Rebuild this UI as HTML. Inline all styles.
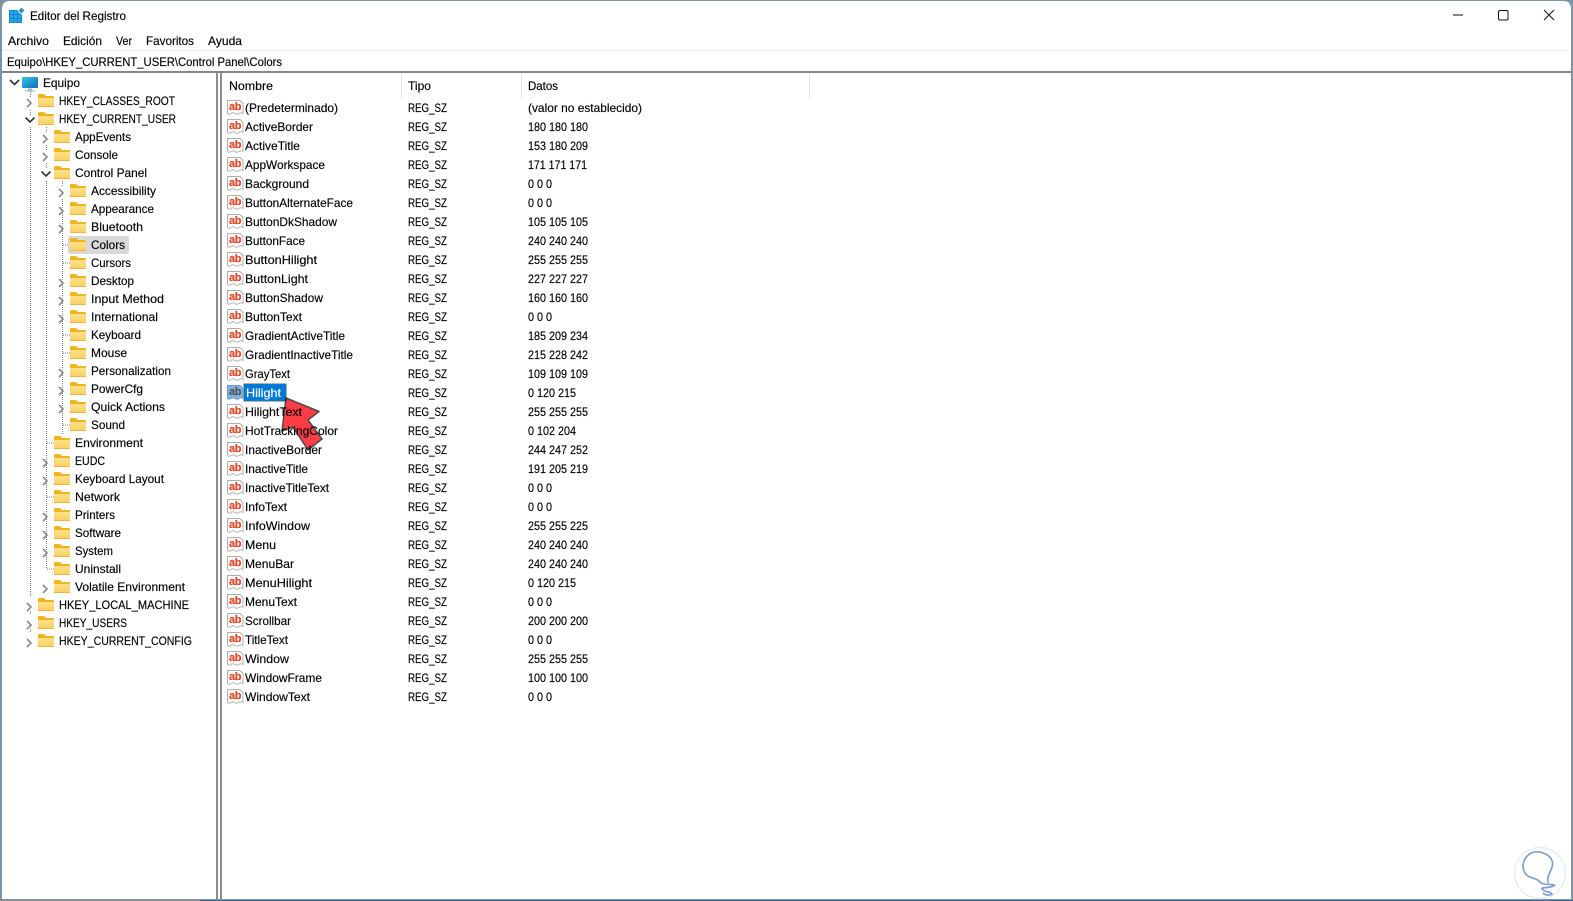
<!DOCTYPE html>
<html lang="es">
<head>
<meta charset="utf-8">
<title>Editor del Registro</title>
<style>
html,body{margin:0;padding:0;width:1573px;height:901px;overflow:hidden;background:#7f93a6}
svg{display:block;position:absolute;left:0;top:0}
text{font-family:"Liberation Sans",sans-serif;font-size:12px;fill:#000;stroke:#000;stroke-width:.15px}
.ab{font-size:11px;font-weight:bold;fill:#e0482a;stroke:#e0482a;stroke-width:.2px;letter-spacing:-.4px}
</style>
</head>
<body>
<svg width="1573" height="901" viewBox="0 0 1573 901" xmlns="http://www.w3.org/2000/svg">
<defs>
<linearGradient id="fg" x1="0" y1="0" x2="0" y2="1"><stop offset="0" stop-color="#ffe08a"/><stop offset="1" stop-color="#fbd062"/></linearGradient>
<linearGradient id="sc" x1="0" y1="0" x2="1" y2="1"><stop offset="0" stop-color="#35c3ea"/><stop offset="1" stop-color="#0f6fb8"/></linearGradient>
<symbol id="f" width="16" height="13" viewBox="0 0 16 13" overflow="visible">
<path d="M0 1.2Q0 0 1.2 0H6L8 2H15Q16 2 16 3V5H0Z" fill="#f1b41f"/>
<path d="M0 4H15.5Q16 4 16 4.5V12Q16 13 15 13H1Q0 13 0 12Z" fill="url(#fg)"/>
<path d="M0 12.5H16" stroke="#eeb63a" stroke-width="1"/>
</symbol>
<symbol id="d" width="18" height="16" viewBox="0 0 18 16" overflow="visible">
<path d="M.5.5H13L16 3.5V13.5Q14 12 12 13.5T8 13.5T4 13.5T.5 13.5Z" fill="#fff" stroke="#b0b0b0"/>
</symbol>
<path id="cr" d="M27 81L31 85L27 89" fill="none" stroke="#8b8b8b" stroke-width="1.6"/>
<path id="ce" d="M25.5 81.500L30 86L34.500 81.500" fill="none" stroke="#333" stroke-width="1.6"/>
</defs>

<!-- window -->
<path d="M2 899V9Q2 1 10 1H1563Q1571 1 1571 9V899Z" fill="#fff"/>
<rect x="0" y="899" width="1573" height="2" fill="#868e96"/>
<rect x="200" y="900" width="1373" height="1" fill="#3f6d9c"/>
<rect x="2" y="50" width="1569" height="1" fill="#efefef"/>
<rect x="2" y="71" width="1569" height="2" fill="#868686"/>
<rect x="216" y="73" width="2" height="826" fill="#8d8d8d"/>
<rect x="220" y="73" width="2" height="826" fill="#8d8d8d"/>

<!-- title bar -->
<rect x="9" y="10" width="13" height="13" fill="#0f74bc"/>
<g fill="#25a6ea">
<rect x="9.500" y="10.500" width="3.600" height="3.600"/><rect x="13.700" y="10.500" width="3.600" height="3.600"/><rect x="17.900" y="10.500" width="3.600" height="3.600"/>
<rect x="9.500" y="14.700" width="3.600" height="3.600"/><rect x="13.700" y="14.700" width="3.600" height="3.600"/><rect x="17.900" y="14.700" width="3.600" height="3.600"/>
<rect x="9.500" y="18.900" width="3.600" height="3.600"/><rect x="13.700" y="18.900" width="3.600" height="3.600"/><rect x="17.900" y="18.900" width="3.600" height="3.600"/>
</g>
<path d="M21.500 7L25 10.500L21.500 14L18 10.500Z" fill="#2a8fd4" stroke="#fff" stroke-width=".8"/>
<text x="30" y="20" textLength="96" lengthAdjust="spacingAndGlyphs">Editor del Registro</text>
<path d="M1453 15H1463" stroke="#111" stroke-width="1"/>
<rect x="1498.500" y="10.500" width="9.500" height="9.500" rx="1.500" fill="none" stroke="#111"/>
<path d="M1544 10L1554 20M1554 10L1544 20" stroke="#111" stroke-width="1"/>

<!-- menu -->
<text x="8" y="45" textLength="41" lengthAdjust="spacingAndGlyphs">Archivo</text>
<text x="63" y="45" textLength="39" lengthAdjust="spacingAndGlyphs">Edición</text>
<text x="116" y="45" textLength="16" lengthAdjust="spacingAndGlyphs">Ver</text>
<text x="146" y="45" textLength="48" lengthAdjust="spacingAndGlyphs">Favoritos</text>
<text x="208" y="45" textLength="34" lengthAdjust="spacingAndGlyphs">Ayuda</text>

<!-- address -->
<text x="7" y="66" textLength="275" lengthAdjust="spacingAndGlyphs">Equipo\HKEY_CURRENT_USER\Control Panel\Colors</text>

<!-- tree guides -->
<g stroke="#7d7d7d" stroke-dasharray="1 1" fill="none">
<path d="M30.500 92V97M30.500 110V115M30.500 127V597M30.500 611V615M30.500 629V633"/>
<path d="M46.500 127V132M46.500 145V150M46.500 163V168M46.500 181V568M54 443H47M54 497H47M54 569H47"/>
<path d="M62.500 181V186M62.500 199V435M70 245H63M70 263H63M70 335H63M70 353H63M70 425H63"/>
</g>
<rect x="68" y="236" width="61" height="18" rx="2" fill="#d9d9d9"/>

<!-- tree -->
<use href="#ce" x="-15.500" y="-1.500"/>
<rect x="22" y="77" width="16" height="11" rx="1" fill="url(#sc)"/>
<path d="M28 88.500H32V90.500H35V91.500H25V90.500H28Z" fill="#9db6c6"/>
<text x="43" y="87" textLength="37" lengthAdjust="spacingAndGlyphs">Equipo</text>

<g transform="translate(0,18)"><use href="#cr"/><use href="#f" x="38" y="76"/><text x="59" y="87" textLength="116" lengthAdjust="spacingAndGlyphs">HKEY_CLASSES_ROOT</text></g>
<g transform="translate(0,36)"><use href="#ce"/><use href="#f" x="38" y="76"/><text x="59" y="87" textLength="117" lengthAdjust="spacingAndGlyphs">HKEY_CURRENT_USER</text></g>
<g transform="translate(0,54)"><use href="#cr" x="16"/><use href="#f" x="54" y="76"/><text x="75" y="87" textLength="56" lengthAdjust="spacingAndGlyphs">AppEvents</text></g>
<g transform="translate(0,72)"><use href="#cr" x="16"/><use href="#f" x="54" y="76"/><text x="75" y="87" textLength="43" lengthAdjust="spacingAndGlyphs">Console</text></g>
<g transform="translate(0,90)"><use href="#ce" x="16"/><use href="#f" x="54" y="76"/><text x="75" y="87" textLength="72" lengthAdjust="spacingAndGlyphs">Control Panel</text></g>
<g transform="translate(0,108)"><use href="#cr" x="32"/><use href="#f" x="70" y="76"/><text x="91" y="87" textLength="65" lengthAdjust="spacingAndGlyphs">Accessibility</text></g>
<g transform="translate(0,126)"><use href="#cr" x="32"/><use href="#f" x="70" y="76"/><text x="91" y="87" textLength="63" lengthAdjust="spacingAndGlyphs">Appearance</text></g>
<g transform="translate(0,144)"><use href="#cr" x="32"/><use href="#f" x="70" y="76"/><text x="91" y="87" textLength="52" lengthAdjust="spacingAndGlyphs">Bluetooth</text></g>
<g transform="translate(0,162)"><use href="#f" x="70" y="76"/><text x="91" y="87" textLength="34" lengthAdjust="spacingAndGlyphs">Colors</text></g>
<g transform="translate(0,180)"><use href="#f" x="70" y="76"/><text x="91" y="87" textLength="40" lengthAdjust="spacingAndGlyphs">Cursors</text></g>
<g transform="translate(0,198)"><use href="#cr" x="32"/><use href="#f" x="70" y="76"/><text x="91" y="87" textLength="43" lengthAdjust="spacingAndGlyphs">Desktop</text></g>
<g transform="translate(0,216)"><use href="#cr" x="32"/><use href="#f" x="70" y="76"/><text x="91" y="87" textLength="73" lengthAdjust="spacingAndGlyphs">Input Method</text></g>
<g transform="translate(0,234)"><use href="#cr" x="32"/><use href="#f" x="70" y="76"/><text x="91" y="87" textLength="67" lengthAdjust="spacingAndGlyphs">International</text></g>
<g transform="translate(0,252)"><use href="#f" x="70" y="76"/><text x="91" y="87" textLength="50" lengthAdjust="spacingAndGlyphs">Keyboard</text></g>
<g transform="translate(0,270)"><use href="#f" x="70" y="76"/><text x="91" y="87" textLength="36" lengthAdjust="spacingAndGlyphs">Mouse</text></g>
<g transform="translate(0,288)"><use href="#cr" x="32"/><use href="#f" x="70" y="76"/><text x="91" y="87" textLength="80" lengthAdjust="spacingAndGlyphs">Personalization</text></g>
<g transform="translate(0,306)"><use href="#cr" x="32"/><use href="#f" x="70" y="76"/><text x="91" y="87" textLength="52" lengthAdjust="spacingAndGlyphs">PowerCfg</text></g>
<g transform="translate(0,324)"><use href="#cr" x="32"/><use href="#f" x="70" y="76"/><text x="91" y="87" textLength="74" lengthAdjust="spacingAndGlyphs">Quick Actions</text></g>
<g transform="translate(0,342)"><use href="#f" x="70" y="76"/><text x="91" y="87" textLength="34" lengthAdjust="spacingAndGlyphs">Sound</text></g>
<g transform="translate(0,360)"><use href="#f" x="54" y="76"/><text x="75" y="87" textLength="68" lengthAdjust="spacingAndGlyphs">Environment</text></g>
<g transform="translate(0,378)"><use href="#cr" x="16"/><use href="#f" x="54" y="76"/><text x="75" y="87" textLength="30" lengthAdjust="spacingAndGlyphs">EUDC</text></g>
<g transform="translate(0,396)"><use href="#cr" x="16"/><use href="#f" x="54" y="76"/><text x="75" y="87" textLength="89" lengthAdjust="spacingAndGlyphs">Keyboard Layout</text></g>
<g transform="translate(0,414)"><use href="#f" x="54" y="76"/><text x="75" y="87" textLength="45" lengthAdjust="spacingAndGlyphs">Network</text></g>
<g transform="translate(0,432)"><use href="#cr" x="16"/><use href="#f" x="54" y="76"/><text x="75" y="87" textLength="40" lengthAdjust="spacingAndGlyphs">Printers</text></g>
<g transform="translate(0,450)"><use href="#cr" x="16"/><use href="#f" x="54" y="76"/><text x="75" y="87" textLength="46" lengthAdjust="spacingAndGlyphs">Software</text></g>
<g transform="translate(0,468)"><use href="#cr" x="16"/><use href="#f" x="54" y="76"/><text x="75" y="87" textLength="38" lengthAdjust="spacingAndGlyphs">System</text></g>
<g transform="translate(0,486)"><use href="#f" x="54" y="76"/><text x="75" y="87" textLength="46" lengthAdjust="spacingAndGlyphs">Uninstall</text></g>
<g transform="translate(0,504)"><use href="#cr" x="16"/><use href="#f" x="54" y="76"/><text x="75" y="87" textLength="110" lengthAdjust="spacingAndGlyphs">Volatile Environment</text></g>
<g transform="translate(0,522)"><use href="#cr"/><use href="#f" x="38" y="76"/><text x="59" y="87" textLength="130" lengthAdjust="spacingAndGlyphs">HKEY_LOCAL_MACHINE</text></g>
<g transform="translate(0,540)"><use href="#cr"/><use href="#f" x="38" y="76"/><text x="59" y="87" textLength="68" lengthAdjust="spacingAndGlyphs">HKEY_USERS</text></g>
<g transform="translate(0,558)"><use href="#cr"/><use href="#f" x="38" y="76"/><text x="59" y="87" textLength="133" lengthAdjust="spacingAndGlyphs">HKEY_CURRENT_CONFIG</text></g>

<!-- list header -->
<text x="229" y="90" textLength="44" lengthAdjust="spacingAndGlyphs">Nombre</text>
<text x="408" y="90" textLength="23" lengthAdjust="spacingAndGlyphs">Tipo</text>
<text x="528" y="90" textLength="30" lengthAdjust="spacingAndGlyphs">Datos</text>
<path d="M401.500 74V98M521.500 74V98M809.500 74V98" stroke="#e5e5e5" stroke-width="1"/>

<!-- list rows -->
<g><use href="#d" x="227" y="100"/><text class="ab" x="229" y="110">ab</text><text x="245" y="112" textLength="93" lengthAdjust="spacingAndGlyphs">(Predeterminado)</text><text x="408" y="112" textLength="39" lengthAdjust="spacingAndGlyphs">REG_SZ</text><text x="528" y="112" textLength="114" lengthAdjust="spacingAndGlyphs">(valor no establecido)</text></g>
<g transform="translate(0,19)"><use href="#d" x="227" y="100"/><text class="ab" x="229" y="110">ab</text><text x="245" y="112" textLength="68" lengthAdjust="spacingAndGlyphs">ActiveBorder</text><text x="408" y="112" textLength="39" lengthAdjust="spacingAndGlyphs">REG_SZ</text><text x="528" y="112" textLength="60" lengthAdjust="spacingAndGlyphs">180 180 180</text></g>
<g transform="translate(0,38)"><use href="#d" x="227" y="100"/><text class="ab" x="229" y="110">ab</text><text x="245" y="112" textLength="55" lengthAdjust="spacingAndGlyphs">ActiveTitle</text><text x="408" y="112" textLength="39" lengthAdjust="spacingAndGlyphs">REG_SZ</text><text x="528" y="112" textLength="60" lengthAdjust="spacingAndGlyphs">153 180 209</text></g>
<g transform="translate(0,57)"><use href="#d" x="227" y="100"/><text class="ab" x="229" y="110">ab</text><text x="245" y="112" textLength="80" lengthAdjust="spacingAndGlyphs">AppWorkspace</text><text x="408" y="112" textLength="39" lengthAdjust="spacingAndGlyphs">REG_SZ</text><text x="528" y="112" textLength="59" lengthAdjust="spacingAndGlyphs">171 171 171</text></g>
<g transform="translate(0,76)"><use href="#d" x="227" y="100"/><text class="ab" x="229" y="110">ab</text><text x="245" y="112" textLength="64" lengthAdjust="spacingAndGlyphs">Background</text><text x="408" y="112" textLength="39" lengthAdjust="spacingAndGlyphs">REG_SZ</text><text x="528" y="112" textLength="24" lengthAdjust="spacingAndGlyphs">0 0 0</text></g>
<g transform="translate(0,95)"><use href="#d" x="227" y="100"/><text class="ab" x="229" y="110">ab</text><text x="245" y="112" textLength="108" lengthAdjust="spacingAndGlyphs">ButtonAlternateFace</text><text x="408" y="112" textLength="39" lengthAdjust="spacingAndGlyphs">REG_SZ</text><text x="528" y="112" textLength="24" lengthAdjust="spacingAndGlyphs">0 0 0</text></g>
<g transform="translate(0,114)"><use href="#d" x="227" y="100"/><text class="ab" x="229" y="110">ab</text><text x="245" y="112" textLength="92" lengthAdjust="spacingAndGlyphs">ButtonDkShadow</text><text x="408" y="112" textLength="39" lengthAdjust="spacingAndGlyphs">REG_SZ</text><text x="528" y="112" textLength="60" lengthAdjust="spacingAndGlyphs">105 105 105</text></g>
<g transform="translate(0,133)"><use href="#d" x="227" y="100"/><text class="ab" x="229" y="110">ab</text><text x="245" y="112" textLength="60" lengthAdjust="spacingAndGlyphs">ButtonFace</text><text x="408" y="112" textLength="39" lengthAdjust="spacingAndGlyphs">REG_SZ</text><text x="528" y="112" textLength="60" lengthAdjust="spacingAndGlyphs">240 240 240</text></g>
<g transform="translate(0,152)"><use href="#d" x="227" y="100"/><text class="ab" x="229" y="110">ab</text><text x="245" y="112" textLength="72" lengthAdjust="spacingAndGlyphs">ButtonHilight</text><text x="408" y="112" textLength="39" lengthAdjust="spacingAndGlyphs">REG_SZ</text><text x="528" y="112" textLength="60" lengthAdjust="spacingAndGlyphs">255 255 255</text></g>
<g transform="translate(0,171)"><use href="#d" x="227" y="100"/><text class="ab" x="229" y="110">ab</text><text x="245" y="112" textLength="63" lengthAdjust="spacingAndGlyphs">ButtonLight</text><text x="408" y="112" textLength="39" lengthAdjust="spacingAndGlyphs">REG_SZ</text><text x="528" y="112" textLength="60" lengthAdjust="spacingAndGlyphs">227 227 227</text></g>
<g transform="translate(0,190)"><use href="#d" x="227" y="100"/><text class="ab" x="229" y="110">ab</text><text x="245" y="112" textLength="78" lengthAdjust="spacingAndGlyphs">ButtonShadow</text><text x="408" y="112" textLength="39" lengthAdjust="spacingAndGlyphs">REG_SZ</text><text x="528" y="112" textLength="60" lengthAdjust="spacingAndGlyphs">160 160 160</text></g>
<g transform="translate(0,209)"><use href="#d" x="227" y="100"/><text class="ab" x="229" y="110">ab</text><text x="245" y="112" textLength="57" lengthAdjust="spacingAndGlyphs">ButtonText</text><text x="408" y="112" textLength="39" lengthAdjust="spacingAndGlyphs">REG_SZ</text><text x="528" y="112" textLength="24" lengthAdjust="spacingAndGlyphs">0 0 0</text></g>
<g transform="translate(0,228)"><use href="#d" x="227" y="100"/><text class="ab" x="229" y="110">ab</text><text x="245" y="112" textLength="100" lengthAdjust="spacingAndGlyphs">GradientActiveTitle</text><text x="408" y="112" textLength="39" lengthAdjust="spacingAndGlyphs">REG_SZ</text><text x="528" y="112" textLength="60" lengthAdjust="spacingAndGlyphs">185 209 234</text></g>
<g transform="translate(0,247)"><use href="#d" x="227" y="100"/><text class="ab" x="229" y="110">ab</text><text x="245" y="112" textLength="108" lengthAdjust="spacingAndGlyphs">GradientInactiveTitle</text><text x="408" y="112" textLength="39" lengthAdjust="spacingAndGlyphs">REG_SZ</text><text x="528" y="112" textLength="60" lengthAdjust="spacingAndGlyphs">215 228 242</text></g>
<g transform="translate(0,266)"><use href="#d" x="227" y="100"/><text class="ab" x="229" y="110">ab</text><text x="245" y="112" textLength="45" lengthAdjust="spacingAndGlyphs">GrayText</text><text x="408" y="112" textLength="39" lengthAdjust="spacingAndGlyphs">REG_SZ</text><text x="528" y="112" textLength="60" lengthAdjust="spacingAndGlyphs">109 109 109</text></g>
<g transform="translate(0,285)">
<path d="M227.500 100.500H240L243 103.500V113.500Q241 112 239 113.500T235 113.500T231 113.500T227.500 113.500Z" fill="#7fb3e2" stroke="#6a9ccb"/>
<text class="ab" x="229" y="110" style="fill:#555;stroke:#555">ab</text>
<rect x="243.500" y="98.500" width="43" height="18" fill="#0078d7" stroke="#f3a94a" stroke-dasharray="1 1"/>
<text x="246" y="112" textLength="35" lengthAdjust="spacingAndGlyphs" style="fill:#fff;stroke:#fff">Hilight</text>
<text x="408" y="112" textLength="39" lengthAdjust="spacingAndGlyphs">REG_SZ</text><text x="528" y="112" textLength="48" lengthAdjust="spacingAndGlyphs">0 120 215</text></g>
<g transform="translate(0,304)"><use href="#d" x="227" y="100"/><text class="ab" x="229" y="110">ab</text><text x="245" y="112" textLength="57" lengthAdjust="spacingAndGlyphs">HilightText</text><text x="408" y="112" textLength="39" lengthAdjust="spacingAndGlyphs">REG_SZ</text><text x="528" y="112" textLength="60" lengthAdjust="spacingAndGlyphs">255 255 255</text></g>
<g transform="translate(0,323)"><use href="#d" x="227" y="100"/><text class="ab" x="229" y="110">ab</text><text x="245" y="112" textLength="93" lengthAdjust="spacingAndGlyphs">HotTrackingColor</text><text x="408" y="112" textLength="39" lengthAdjust="spacingAndGlyphs">REG_SZ</text><text x="528" y="112" textLength="48" lengthAdjust="spacingAndGlyphs">0 102 204</text></g>
<g transform="translate(0,342)"><use href="#d" x="227" y="100"/><text class="ab" x="229" y="110">ab</text><text x="245" y="112" textLength="77" lengthAdjust="spacingAndGlyphs">InactiveBorder</text><text x="408" y="112" textLength="39" lengthAdjust="spacingAndGlyphs">REG_SZ</text><text x="528" y="112" textLength="60" lengthAdjust="spacingAndGlyphs">244 247 252</text></g>
<g transform="translate(0,361)"><use href="#d" x="227" y="100"/><text class="ab" x="229" y="110">ab</text><text x="245" y="112" textLength="63" lengthAdjust="spacingAndGlyphs">InactiveTitle</text><text x="408" y="112" textLength="39" lengthAdjust="spacingAndGlyphs">REG_SZ</text><text x="528" y="112" textLength="60" lengthAdjust="spacingAndGlyphs">191 205 219</text></g>
<g transform="translate(0,380)"><use href="#d" x="227" y="100"/><text class="ab" x="229" y="110">ab</text><text x="245" y="112" textLength="84" lengthAdjust="spacingAndGlyphs">InactiveTitleText</text><text x="408" y="112" textLength="39" lengthAdjust="spacingAndGlyphs">REG_SZ</text><text x="528" y="112" textLength="24" lengthAdjust="spacingAndGlyphs">0 0 0</text></g>
<g transform="translate(0,399)"><use href="#d" x="227" y="100"/><text class="ab" x="229" y="110">ab</text><text x="245" y="112" textLength="42" lengthAdjust="spacingAndGlyphs">InfoText</text><text x="408" y="112" textLength="39" lengthAdjust="spacingAndGlyphs">REG_SZ</text><text x="528" y="112" textLength="24" lengthAdjust="spacingAndGlyphs">0 0 0</text></g>
<g transform="translate(0,418)"><use href="#d" x="227" y="100"/><text class="ab" x="229" y="110">ab</text><text x="245" y="112" textLength="65" lengthAdjust="spacingAndGlyphs">InfoWindow</text><text x="408" y="112" textLength="39" lengthAdjust="spacingAndGlyphs">REG_SZ</text><text x="528" y="112" textLength="60" lengthAdjust="spacingAndGlyphs">255 255 225</text></g>
<g transform="translate(0,437)"><use href="#d" x="227" y="100"/><text class="ab" x="229" y="110">ab</text><text x="245" y="112" textLength="31" lengthAdjust="spacingAndGlyphs">Menu</text><text x="408" y="112" textLength="39" lengthAdjust="spacingAndGlyphs">REG_SZ</text><text x="528" y="112" textLength="60" lengthAdjust="spacingAndGlyphs">240 240 240</text></g>
<g transform="translate(0,456)"><use href="#d" x="227" y="100"/><text class="ab" x="229" y="110">ab</text><text x="245" y="112" textLength="49" lengthAdjust="spacingAndGlyphs">MenuBar</text><text x="408" y="112" textLength="39" lengthAdjust="spacingAndGlyphs">REG_SZ</text><text x="528" y="112" textLength="60" lengthAdjust="spacingAndGlyphs">240 240 240</text></g>
<g transform="translate(0,475)"><use href="#d" x="227" y="100"/><text class="ab" x="229" y="110">ab</text><text x="245" y="112" textLength="67" lengthAdjust="spacingAndGlyphs">MenuHilight</text><text x="408" y="112" textLength="39" lengthAdjust="spacingAndGlyphs">REG_SZ</text><text x="528" y="112" textLength="48" lengthAdjust="spacingAndGlyphs">0 120 215</text></g>
<g transform="translate(0,494)"><use href="#d" x="227" y="100"/><text class="ab" x="229" y="110">ab</text><text x="245" y="112" textLength="52" lengthAdjust="spacingAndGlyphs">MenuText</text><text x="408" y="112" textLength="39" lengthAdjust="spacingAndGlyphs">REG_SZ</text><text x="528" y="112" textLength="24" lengthAdjust="spacingAndGlyphs">0 0 0</text></g>
<g transform="translate(0,513)"><use href="#d" x="227" y="100"/><text class="ab" x="229" y="110">ab</text><text x="245" y="112" textLength="46" lengthAdjust="spacingAndGlyphs">Scrollbar</text><text x="408" y="112" textLength="39" lengthAdjust="spacingAndGlyphs">REG_SZ</text><text x="528" y="112" textLength="60" lengthAdjust="spacingAndGlyphs">200 200 200</text></g>
<g transform="translate(0,532)"><use href="#d" x="227" y="100"/><text class="ab" x="229" y="110">ab</text><text x="245" y="112" textLength="43" lengthAdjust="spacingAndGlyphs">TitleText</text><text x="408" y="112" textLength="39" lengthAdjust="spacingAndGlyphs">REG_SZ</text><text x="528" y="112" textLength="24" lengthAdjust="spacingAndGlyphs">0 0 0</text></g>
<g transform="translate(0,551)"><use href="#d" x="227" y="100"/><text class="ab" x="229" y="110">ab</text><text x="245" y="112" textLength="44" lengthAdjust="spacingAndGlyphs">Window</text><text x="408" y="112" textLength="39" lengthAdjust="spacingAndGlyphs">REG_SZ</text><text x="528" y="112" textLength="60" lengthAdjust="spacingAndGlyphs">255 255 255</text></g>
<g transform="translate(0,570)"><use href="#d" x="227" y="100"/><text class="ab" x="229" y="110">ab</text><text x="245" y="112" textLength="77" lengthAdjust="spacingAndGlyphs">WindowFrame</text><text x="408" y="112" textLength="39" lengthAdjust="spacingAndGlyphs">REG_SZ</text><text x="528" y="112" textLength="60" lengthAdjust="spacingAndGlyphs">100 100 100</text></g>
<g transform="translate(0,589)"><use href="#d" x="227" y="100"/><text class="ab" x="229" y="110">ab</text><text x="245" y="112" textLength="65" lengthAdjust="spacingAndGlyphs">WindowText</text><text x="408" y="112" textLength="39" lengthAdjust="spacingAndGlyphs">REG_SZ</text><text x="528" y="112" textLength="24" lengthAdjust="spacingAndGlyphs">0 0 0</text></g>

<!-- red arrow: text shows through -->
<path d="M286 398L319 411.500L308 420L322 439L308 450L293 427L282 431Z" fill="#ff3d44" stroke="#4a4a4a" stroke-width="1.500" stroke-linejoin="round" style="mix-blend-mode:multiply"/>

<!-- watermark -->
<circle cx="1540" cy="873" r="25.500" fill="#fff" stroke="#e6ecf5" stroke-width="1.500"/>
<g transform="translate(1480,820) scale(.3333)" fill="none" stroke="#7d9fcf" stroke-width="5" stroke-linecap="round" stroke-linejoin="round">
<path d="M204 186C198 165 225 142 216 122C205 96 165 88 146 104C126 120 124 150 140 165C150 176 174 174 182 188C190 196 210 190 224 196C210 206 188 200 186 206C190 216 210 214 216 222C208 228 198 226 190 220"/>
</g>
</svg>
</body>
</html>
